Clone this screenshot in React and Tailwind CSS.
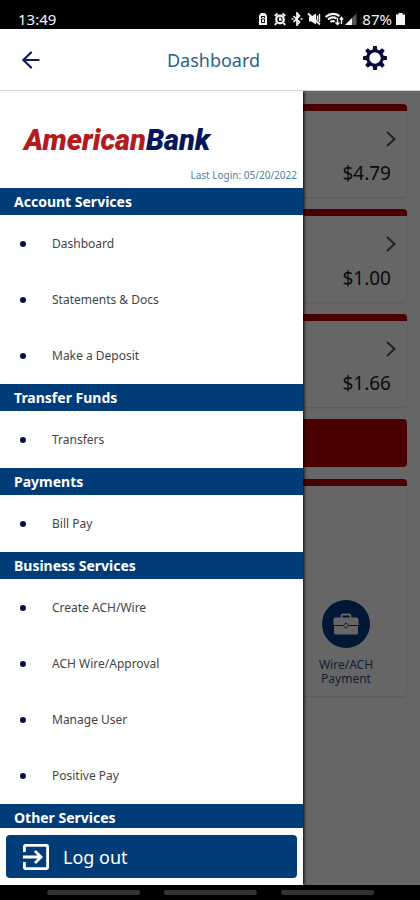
import React from 'react';
import { ArrowLeft } from 'lucide-react';

const accounts = [
  { id: 1, balance: '$4.79' },
  { id: 2, balance: '$1.00' },
  { id: 3, balance: '$1.66' },
];

const menu = [
  { title: 'Account Services', items: ['Dashboard', 'Statements & Docs', 'Make a Deposit'] },
  { title: 'Transfer Funds', items: ['Transfers'] },
  { title: 'Payments', items: ['Bill Pay'] },
  {
    title: 'Business Services',
    items: ['Create ACH/Wire', 'ACH Wire/Approval', 'Manage User', 'Positive Pay'],
  },
  { title: 'Other Services', items: [] },
];

function GearIcon({ className }) {
  const teeth = [0, 45, 90, 135, 180, 225, 270, 315];
  return (
    <svg viewBox="0 0 24 24" className={className} aria-hidden="true">
      <circle cx="12" cy="12" r="7.2" fill="none" stroke="currentColor" strokeWidth="3" />
      {teeth.map((angle) => (
        <path key={angle} d="M10.2 0h3.6l.7 4.5h-5z" fill="currentColor" transform={`rotate(${angle} 12 12)`} />
      ))}
    </svg>
  );
}

function ChevronIcon({ className }) {
  return (
    <svg viewBox="0 0 10 16" className={className} fill="none" stroke="currentColor" strokeWidth="2" aria-hidden="true">
      <path d="m1 1 7.5 7L1 15" />
    </svg>
  );
}

function LogoutIcon({ className }) {
  return (
    <svg viewBox="0 0 28 28" className={className} fill="none" stroke="currentColor" strokeWidth="2.8" aria-hidden="true">
      <path d="M2.4 9V3.400a1 1 0 0 1 1-1h21.200a1 1 0 0 1 1 1v21.200a1 1 0 0 1-1 1H3.400a1 1 0 0 1-1-1V19" />
      <path d="M1 14h17.500M13 8l6 6-6 6" />
    </svg>
  );
}

function BriefcaseIcon({ className }) {
  return (
    <svg viewBox="0 0 26 22" className={className} aria-hidden="true">
      <path d="M8.500 5V3a1.500 1.500 0 0 1 1.500-1.500h6A1.500 1.500 0 0 1 17.500 3v2" fill="none" stroke="currentColor" strokeWidth="1.8" />
      <path d="M2.500 4.500h21a2 2 0 0 1 2 2V12H.5V6.500a2 2 0 0 1 2-2z" fill="currentColor" />
      <path d="M1 13h24v7a1.500 1.500 0 0 1-1.500 1.500h-21A1.500 1.500 0 0 1 1 20z" fill="currentColor" />
      <path d="m13 9.800 2.700 2.700-2.700 2.700-2.700-2.700z" fill="currentColor" stroke="#003c84" strokeWidth="1" />
    </svg>
  );
}

function StatusIcons() {
  return (
    <svg viewBox="0 0 100 14" className="h-3.5 w-[100px]" fill="none" stroke="currentColor" aria-hidden="true">
      {/* Battery saver */}
      <path d="M1 3.500 3 1h4l2 2.500V13H1z" fill="currentColor" stroke="none" />
      <path d="M3.500 6V4.500h3V6M3.500 7v3.500h3V7z" stroke="#000" />
      {/* Alarm */}
      <circle cx="22" cy="7.500" r="3.800" strokeWidth="2.200" />
      <path d="M22 5.500v2.300h1.800M16.800 4 19.500 1.500M27.200 4 24.500 1.500M18.500 11 17 13M25.500 11l1.500 2" strokeWidth="2" />
      {/* Bluetooth */}
      <path d="m35.500 4 6 6-2.500 3V1l2.500 3-6 6M33.500 7h2M42.500 7h2" strokeWidth="1.700" />
      {/* Muted */}
      <path d="M51 4.500h2.500L58 1.500v11L53.500 9.500H51z" fill="currentColor" stroke="none" />
      <path d="M50 1.500l12 11" strokeWidth="1.800" />
      <path d="M59.500 3.500v5M61.500 2v8" strokeWidth="1.400" />
      {/* Wi-Fi calling */}
      <path d="M67.500 5q7-5.500 14-1M70 7.500q4.500-3.500 8.500-1M72.500 10q2.500-2 4 0" strokeWidth="2.200" />
      <path d="M79.500 6v6.500m-2-2 2 2 2-2M83.500 12V5.500m-1.500 2 1.500-2 1.500 2" strokeWidth="1.400" />
      {/* Signal */}
      <path d="M87 13 98.500 1.500V13z" fill="#555" stroke="none" />
      <path d="M87 13 94 6v7z" fill="currentColor" stroke="none" />
    </svg>
  );
}

function AccountCard({ balance }) {
  return (
    <button className="flex h-[93px] w-full flex-col items-end rounded border-t-[7px] border-[#b80000] bg-white pr-4 pt-5 text-[19px] leading-7 text-[#222] shadow">
      <ChevronIcon className="-mr-[5px] mb-3 h-4 w-2.5 text-[#555]" />
      <span>{balance}</span>
    </button>
  );
}

function Drawer() {
  return (
    <aside className="absolute inset-y-0 left-0 flex w-[303px] max-w-[85%] flex-col bg-white shadow-[1px_0_3px_#000]">
      <div className="flex h-[97px] shrink-0 flex-col justify-end">
        <p className="pl-6 font-['Roboto',sans-serif] text-[29px] font-black italic leading-9 text-[#b51a1e]">
          American<span className="text-[#06165a]">Bank</span>
        </p>
        <p className="mt-1 pr-1.5 text-right text-[10px] leading-[26px] text-[#4f7f99]">Last Login: 05/20/2022</p>
      </div>

      <nav className="min-h-0 flex-1 overflow-y-auto [scrollbar-width:none]">
        {menu.map((section) => (
          <section key={section.title}>
            <h2 className="h-[27px] bg-[#003c78] pl-3.5 text-sm font-bold leading-[27px] text-white">
              {section.title}
            </h2>
            <ul className="pt-px">
              {section.items.map((item) => (
                <li key={item}>
                  <a href="#" className="flex h-14 items-center gap-[26px] pl-5 text-xs text-[#444]">
                    <span className="h-1.5 w-1.5 rounded-full bg-[#06104a]" />
                    {item}
                  </a>
                </li>
              ))}
            </ul>
          </section>
        ))}
      </nav>

      <div className="shrink-0 px-1.5 pb-[7px] pt-[7px]">
        <button className="flex h-[43px] w-full items-center gap-[13px] rounded bg-[#003c78] pl-[22px] text-lg text-white">
          <LogoutIcon className="-ml-1.5 h-7 w-7" />
          Log out
        </button>
      </div>
    </aside>
  );
}

export default function App() {
  return (
    <div className="flex h-screen flex-col bg-black font-['Noto_Sans',sans-serif]">
      {/* Status bar */}
      <div className="flex h-[29px] shrink-0 items-center justify-between pl-[18px] pr-[15px] pt-2 text-[15px] leading-5 text-gray-100">
        <span>13:49</span>
        <div className="flex items-center gap-1">
          <StatusIcons />
          <span>87%</span>
          <svg viewBox="0 0 9 12" className="h-3 w-[9px]" fill="currentColor" aria-hidden="true">
            <path d="M2.500 0h4v1.500H9V12H0V1.500h2.500z" />
          </svg>
        </div>
      </div>

      {/* Header */}
      <header className="z-10 flex h-[62px] shrink-0 items-center border-b border-gray-300 bg-white pl-[18px] pr-[33px]">
        <button aria-label="Back" className="text-[#0b1a6b]">
          <ArrowLeft className="h-[26px] w-[26px]" strokeWidth={2} />
        </button>
        <h1 className="flex-1 pl-5 text-center text-lg text-[#2d5f8b]">Dashboard</h1>
        <button aria-label="Settings" className="pb-1 text-[#08083a]">
          <GearIcon className="h-6 w-6" />
        </button>
      </header>

      {/* Page under the open drawer */}
      <div className="relative min-h-0 flex-1 overflow-hidden bg-white">
        <main className="flex flex-col gap-3 px-[13px] pt-[13px]">
          {accounts.map((account) => (
            <AccountCard key={account.id} balance={account.balance} />
          ))}
          <button aria-label="Transfer" className="h-12 rounded bg-[#b80000]" />
          <div className="flex h-[217px] items-end justify-end rounded border-t-[7px] border-[#b80000] bg-white pb-2.5 pr-7 shadow">
            <a href="#" className="flex w-[66px] flex-col items-center text-center text-xs leading-3.5 text-[#2d4f8b]">
              <span className="mb-2.5 flex h-12 w-12 items-center justify-center rounded-full bg-[#003c84] text-white">
                <BriefcaseIcon className="h-[22px] w-[26px]" />
              </span>
              Wire/ACH Payment
            </a>
          </div>
        </main>
        <div className="absolute inset-0 bg-black/60" />
        <Drawer />
      </div>

      {/* System navigation */}
      <div className="flex h-[15px] shrink-0 items-center justify-center gap-6">
        <span className="h-[5px] w-[93px] rounded-sm bg-[#333]" />
        <span className="h-[5px] w-[93px] rounded-sm bg-[#333]" />
        <span className="h-[5px] w-[93px] rounded-sm bg-[#333]" />
      </div>
    </div>
  );
}
